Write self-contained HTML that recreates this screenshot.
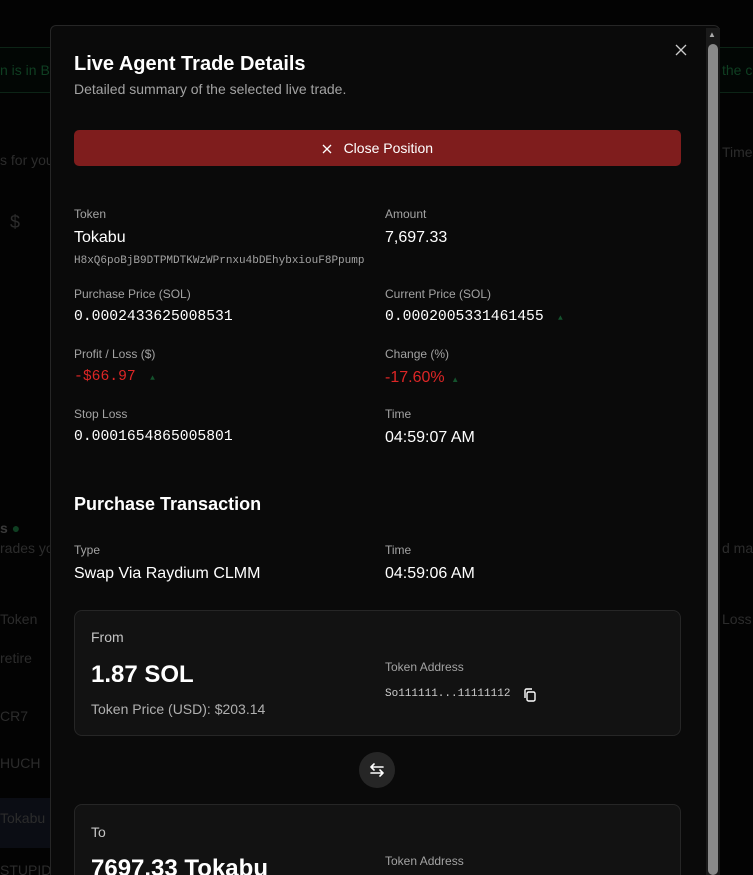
<!DOCTYPE html>
<html><head><meta charset="utf-8"><style>
*{margin:0;padding:0;box-sizing:border-box}
html,body{width:753px;height:875px;overflow:hidden}
body{background:#030303;font-family:"Liberation Sans",sans-serif;position:relative;color:#fff}
.a{position:absolute;white-space:nowrap}
.bg{color:#2c2c2c;font-size:14px}
.m{position:absolute;left:50px;top:25px;width:670px;height:860px;background:#0a0a0a;border:1px solid #262626;border-radius:6px}
.lbl{color:#a3a3a3;font-size:12px}
.val{color:#fff;font-size:16px}
.mono{font-family:"Liberation Mono",monospace}
.card{position:absolute;left:74px;width:607px;background:#121212;border:1px solid #262626;border-radius:8px}
.tri{color:#14532d;font-size:8px}
</style></head><body>
<div class="a" style="left:0;top:47px;width:753px;height:46px;border-top:1px solid #0c2416;border-bottom:1px solid #0c2416;background:#020604"></div>
<div class="a" style="left:0;top:62px;color:#0f3f22;font-size:14px">n is in Be</div>
<div class="a" style="left:722px;top:62px;color:#0f3f22;font-size:14px">the c</div>
<div class="a bg" style="left:0;top:152px">s for you</div>
<div class="a bg" style="left:722px;top:144px">Time</div>
<div class="a bg" style="left:10px;top:212px;font-size:18px">$</div>
<div class="a" style="left:0;top:520px;color:#3a3a3a;font-size:14px;font-weight:bold">s <span style="color:#0f3f22">●</span></div>
<div class="a bg" style="left:0;top:540px">rades yo</div>
<div class="a bg" style="left:722px;top:540px">d mar</div>
<div class="a bg" style="left:0;top:611px">Token</div>
<div class="a bg" style="left:722px;top:611px">Loss</div>
<div class="a bg" style="left:0;top:650px">retire</div>
<div class="a bg" style="left:0;top:708px">CR7</div>
<div class="a bg" style="left:0;top:755px">HUCH</div>
<div class="a" style="left:0;top:798px;width:50px;height:50px;background:#0b0d14"></div>
<div class="a bg" style="left:0;top:810px">Tokabu</div>
<div class="a bg" style="left:0;top:862px">STUPID</div>

<div class="m"></div>
<div class="a" style="left:706px;top:28px;width:14px;height:847px;background:#1a1a1a"></div>
<div class="a" style="left:708px;top:44px;width:10px;height:831px;background:#8a8a8a;border-radius:5px"></div>
<div class="a" style="left:708px;top:30px;color:#aaa;font-size:8px">▲</div>
<svg class="a" style="left:675px;top:44px" width="12" height="12" viewBox="0 0 12 12" stroke="#ccc" stroke-width="1.3"><path d="M1 1l10 10M11 1L1 11"/></svg>

<div class="a" style="left:74px;top:53px;font-size:20px;font-weight:bold">Live Agent Trade Details</div>
<div class="a" style="left:74px;top:81px;color:#a3a3a3;font-size:14px">Detailed summary of the selected live trade.</div>
<div class="a" style="left:74px;top:130px;width:607px;height:36px;background:#7f1d1d;border-radius:5px;text-align:center;line-height:36px;font-size:14px"><svg width="10" height="10" viewBox="0 0 10 10" stroke="#fff" stroke-width="1.3" style="vertical-align:-1px"><path d="M1 1l8 8M9 1L1 9"/></svg>&nbsp;&nbsp;&nbsp;Close Position</div>

<div class="a lbl" style="left:74px;top:207px">Token</div>
<div class="a val" style="left:74px;top:229px">Tokabu</div>
<div class="a mono" style="left:74px;top:255px;color:#a3a3a3;font-size:11px">H8xQ6poBjB9DTPMDTKWzWPrnxu4bDEhybxiouF8Ppump</div>
<div class="a lbl" style="left:385px;top:207px">Amount</div>
<div class="a val" style="left:385px;top:229px">7,697.33</div>

<div class="a lbl" style="left:74px;top:287px">Purchase Price (SOL)</div>
<div class="a val mono" style="left:74px;top:309px;font-size:14.7px">0.0002433625008531</div>
<div class="a lbl" style="left:385px;top:287px">Current Price (SOL)</div>
<div class="a val mono" style="left:385px;top:309px;font-size:14.7px">0.0002005331461455<span class="tri">&nbsp;&nbsp;&nbsp;▲</span></div>

<div class="a lbl" style="left:74px;top:347px">Profit / Loss ($)</div>
<div class="a mono" style="left:74px;top:369px;color:#dc2626;font-size:14.7px">-$66.97<span class="tri">&nbsp;&nbsp;&nbsp;▲</span></div>
<div class="a lbl" style="left:385px;top:347px">Change (%)</div>
<div class="a" style="left:385px;top:369px;color:#dc2626;font-size:16px">-17.60%<span class="tri">&nbsp;&nbsp;&nbsp;▲</span></div>

<div class="a lbl" style="left:74px;top:407px">Stop Loss</div>
<div class="a val mono" style="left:74px;top:429px;font-size:14.7px">0.0001654865005801</div>
<div class="a lbl" style="left:385px;top:407px">Time</div>
<div class="a val" style="left:385px;top:429px">04:59:07 AM</div>

<div class="a" style="left:74px;top:494px;font-size:18px;font-weight:bold">Purchase Transaction</div>
<div class="a lbl" style="left:74px;top:543px">Type</div>
<div class="a val" style="left:74px;top:565px">Swap Via Raydium CLMM</div>
<div class="a lbl" style="left:385px;top:543px">Time</div>
<div class="a val" style="left:385px;top:565px">04:59:06 AM</div>

<div class="card" style="top:610px;height:126px"></div>
<div class="a" style="left:91px;top:629px;color:#c4c4c4;font-size:14px">From</div>
<div class="a" style="left:91px;top:661px;font-size:24px;font-weight:bold">1.87 SOL</div>
<div class="a" style="left:91px;top:701px;color:#b0b0b0;font-size:14px">Token Price (USD): $203.14</div>
<div class="a lbl" style="left:385px;top:660px">Token Address</div>
<div class="a mono" style="left:385px;top:688px;color:#ccc;font-size:11px">So111111...11111112</div>
<svg class="a" style="left:522px;top:687px" width="16" height="16" viewBox="0 0 16 16" fill="none" stroke="#fff" stroke-width="1.4"><rect x="5" y="5" width="8" height="9" rx="1.5"/><path d="M3 11V3.5A1.5 1.5 0 0 1 4.5 2H10"/></svg>

<div class="a" style="left:359px;top:752px;width:36px;height:36px;border-radius:50%;background:#262626"></div>
<svg class="a" style="left:367px;top:760px" width="20" height="20" viewBox="0 0 20 20" fill="none" stroke="#fff" stroke-width="1.6" stroke-linecap="round" stroke-linejoin="round"><path d="M16 7H4M7 4L4 7l3 3M4 13h12M13 10l3 3-3 3"/></svg>

<div class="card" style="top:804px;height:90px"></div>
<div class="a" style="left:91px;top:824px;color:#c4c4c4;font-size:14px">To</div>
<div class="a" style="left:91px;top:855px;font-size:24px;font-weight:bold">7697.33 Tokabu</div>
<div class="a lbl" style="left:385px;top:854px">Token Address</div>
</body></html>
